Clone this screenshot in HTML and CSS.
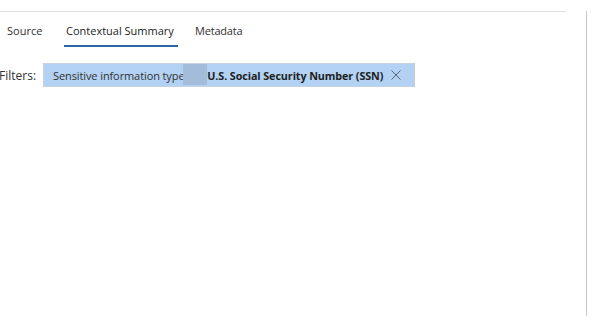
FILE: index.html
```html
<!DOCTYPE html>
<html lang="en">

<head>
	<meta charset="UTF-8">
	<meta name="viewport" content="width=device-width, initial-scale=1.0">
	<title>Contextual Summary</title>
	<link rel="stylesheet" href="styles.css">
</head>

<body>
	<div class="pane">
		<div class="divider"></div>

		<div class="tabs">
			<div class="tab tab-source">Source</div>
			<div class="tab tab-summary active">Contextual Summary</div>
			<div class="tab tab-meta">Metadata</div>
		</div>

		<div class="filters">
			<span class="filters-label">Filters:</span>
			<div class="pill">
				<span class="pill-key">Sensitive information type:</span>
				<span class="pill-mask"></span>
				<span class="pill-value">U.S. Social Security Number (SSN)</span>
				<svg class="pill-close" width="10" height="10" viewBox="0 0 10 10">
					<path d="M0.5 0.5 L9.5 9.5 M9.5 0.5 L0.5 9.5" stroke="#5a6473" stroke-width="1" fill="none" />
				</svg>
			</div>
		</div>
	</div>
</body>

</html>
```

FILE: styles.css
```css
* {
	font-family: 'Open Sans', 'Noto Sans', sans-serif;
	box-sizing: border-box;
}

body {
	margin: 0;
	background: #fff;
	color: #323130;
}

.pane {
	width: 587px;
	height: 305px;
	border-right: 1px solid #c8c8c8;
}

.divider {
	margin-top: 11px;
	width: 566px;
	height: 1px;
	background: #e1e1e1;
}

.tabs {
	display: flex;
	height: 36px;
	padding-top: 10px;
}

.tab {
	font-size: 11px;
	height: 25px;
	padding-top: 1px;
	color: #323130;
}

.tab-source {
	margin-left: 7px;
	width: 57px;
}

.tab-summary {
	padding-left: 2px;
	width: 114px;
	font-weight: 500;
}

.tab-meta {
	margin-left: 17px;
	letter-spacing: -0.2px;
}

.active {
	border-bottom: 2px solid #2b64a8;
	color: #201f1e;
}

.filters {
	display: flex;
	align-items: center;
	margin-top: 15px;
}

.filters-label {
	font-size: 12px;
	margin-left: -1px;
	width: 44px;
	color: #323130;
}

.pill {
	position: relative;
	display: flex;
	align-items: center;
	height: 24px;
	width: 372px;
	padding-left: 9px;
	background: #b3d1f3;
	border: 1px solid #c8d2de;
	border-right-color: #c8cdd3;
	font-size: 11px;
}

.pill-key {
	color: #323130;
	letter-spacing: -0.1px;
	white-space: nowrap;
}

/* redacted block laid over the end of the key */
.pill-mask {
	position: absolute;
	left: 139px;
	top: 0;
	width: 24px;
	height: 21px;
	background: #a3bcd9;
}

.pill-value {
	margin-left: 20px;
	font-weight: bold;
	font-size: 10.8px;
	letter-spacing: -0.1px;
	color: #201f1e;
	white-space: nowrap;
}

.pill-close {
	margin-left: 8px;
}
```
